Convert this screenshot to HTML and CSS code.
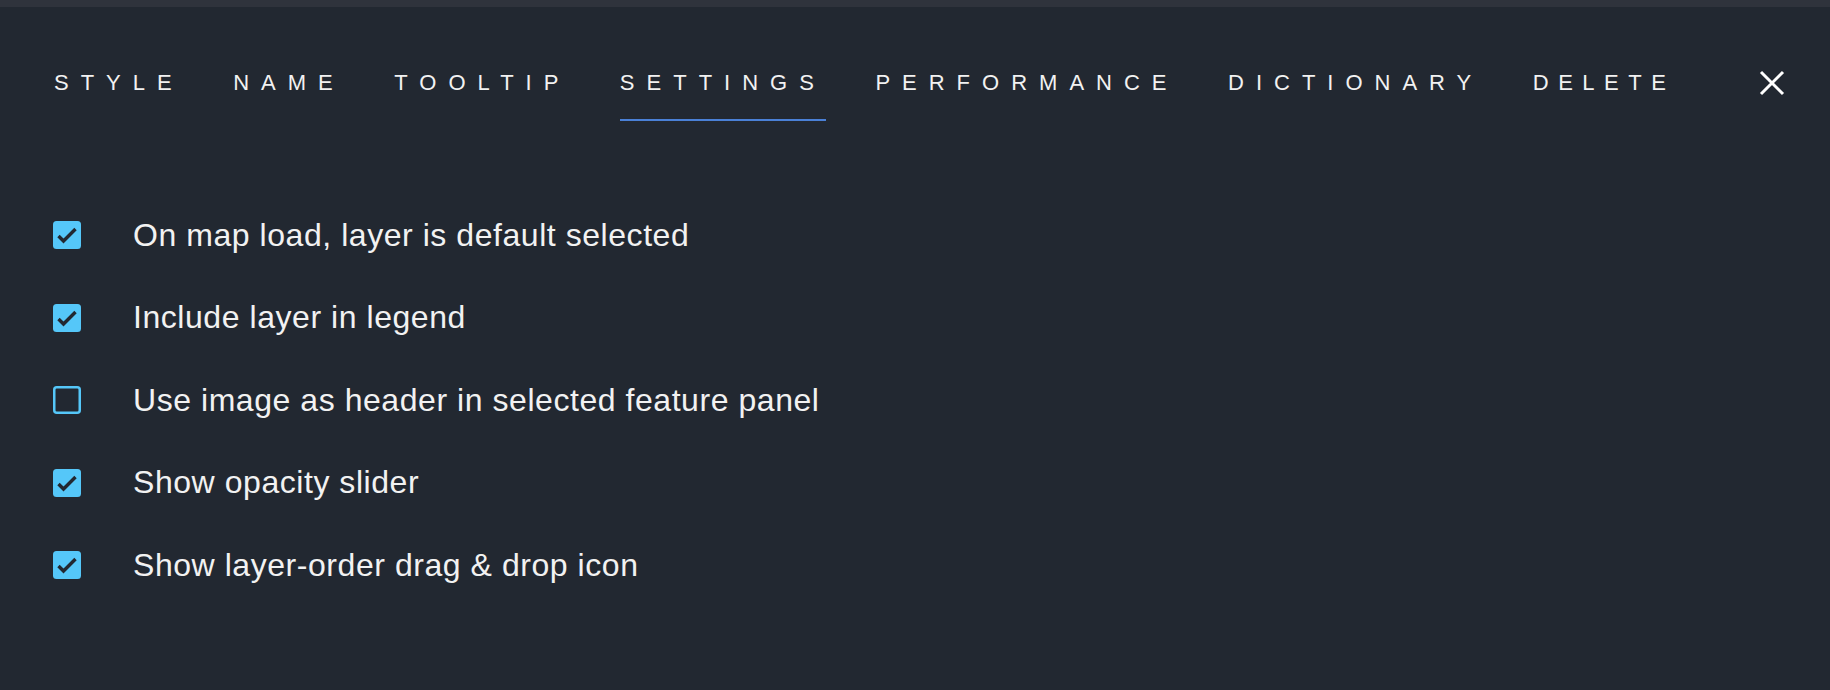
FILE: index.html
```html
<!DOCTYPE html>
<html lang="en">
<head>
<meta charset="utf-8">
<title>Layer settings</title>
<link rel="stylesheet" href="styles.css">
</head>
<body>
<div class="topbar"></div>
<div class="panel">
  <nav class="tabs">
    <div class="tab">STYLE</div>
    <div class="tab">NAME</div>
    <div class="tab">TOOLTIP</div>
    <div class="tab active">SETTINGS</div>
    <div class="tab">PERFORMANCE</div>
    <div class="tab">DICTIONARY</div>
    <div class="tab tab-last">DELETE</div>
    <button class="close" aria-label="Close">
      <svg width="26" height="26" viewBox="0 0 26 26"><path d="M2 2 L24 24 M24 2 L2 24" stroke="#ffffff" stroke-width="3" fill="none"/></svg>
    </button>
  </nav>
  <ul class="options">
    <li class="option">
      <svg class="cb" width="28" height="28" viewBox="0 0 28 28"><rect width="28" height="28" rx="3.5" fill="#55c7f9"/><polyline points="5.5,15 10.5,20 22.5,8" fill="none" stroke="#222831" stroke-width="3.4"/></svg>
      <span class="label">On map load, layer is default selected</span>
    </li>
    <li class="option">
      <svg class="cb" width="28" height="28" viewBox="0 0 28 28"><rect width="28" height="28" rx="3.5" fill="#55c7f9"/><polyline points="5.5,15 10.5,20 22.5,8" fill="none" stroke="#222831" stroke-width="3.4"/></svg>
      <span class="label">Include layer in legend</span>
    </li>
    <li class="option">
      <svg class="cb" width="28" height="28" viewBox="0 0 28 28"><rect x="1.25" y="1.25" width="25.5" height="25.5" rx="2.5" fill="none" stroke="#55c7f9" stroke-width="2.5"/></svg>
      <span class="label">Use image as header in selected feature panel</span>
    </li>
    <li class="option">
      <svg class="cb" width="28" height="28" viewBox="0 0 28 28"><rect width="28" height="28" rx="3.5" fill="#55c7f9"/><polyline points="5.5,15 10.5,20 22.5,8" fill="none" stroke="#222831" stroke-width="3.4"/></svg>
      <span class="label">Show opacity slider</span>
    </li>
    <li class="option">
      <svg class="cb" width="28" height="28" viewBox="0 0 28 28"><rect width="28" height="28" rx="3.5" fill="#55c7f9"/><polyline points="5.5,15 10.5,20 22.5,8" fill="none" stroke="#222831" stroke-width="3.4"/></svg>
      <span class="label">Show layer-order drag &amp; drop icon</span>
    </li>
  </ul>
</div>
</body>
</html>
```
FILE: styles.css
```css
html, body {
  margin: 0;
  padding: 0;
  height: 100%;
  background: #222831;
}
body {
  font-family: "Liberation Sans", Arial, sans-serif;
  color: #f2f2f2;
  overflow: hidden;
}
.topbar {
  height: 7px;
  background: #2f333c;
}
.panel {
  background: #222831;
}
.tabs {
  display: flex;
  align-items: flex-start;
  padding: 63px 45px 0 54px;
  gap: 49.5px;
}
.tab {
  font-size: 22px;
  line-height: 26px;
  letter-spacing: 12px;
  color: #f2f2f2;
  padding-bottom: 23px;
  border-bottom: 2px solid transparent;
  white-space: nowrap;
}
.tab-last {
  letter-spacing: 9.5px;
}
.tab.active {
  border-bottom-color: #4a80d6;
}
.close {
  margin-left: auto;
  background: none;
  border: 0;
  padding: 0;
  width: 26px;
  height: 26px;
  display: block;
  cursor: pointer;
}
.close svg {
  display: block;
}
.options {
  list-style: none;
  margin: 73px 0 0 0;
  padding: 0 0 0 53px;
}
.option {
  display: flex;
  align-items: center;
  gap: 52px;
  height: 82.5px;
}
.cb {
  flex: none;
  display: block;
}
.label {
  font-size: 32px;
  letter-spacing: 0.55px;
  color: #f2f2f2;
  white-space: nowrap;
}
```
